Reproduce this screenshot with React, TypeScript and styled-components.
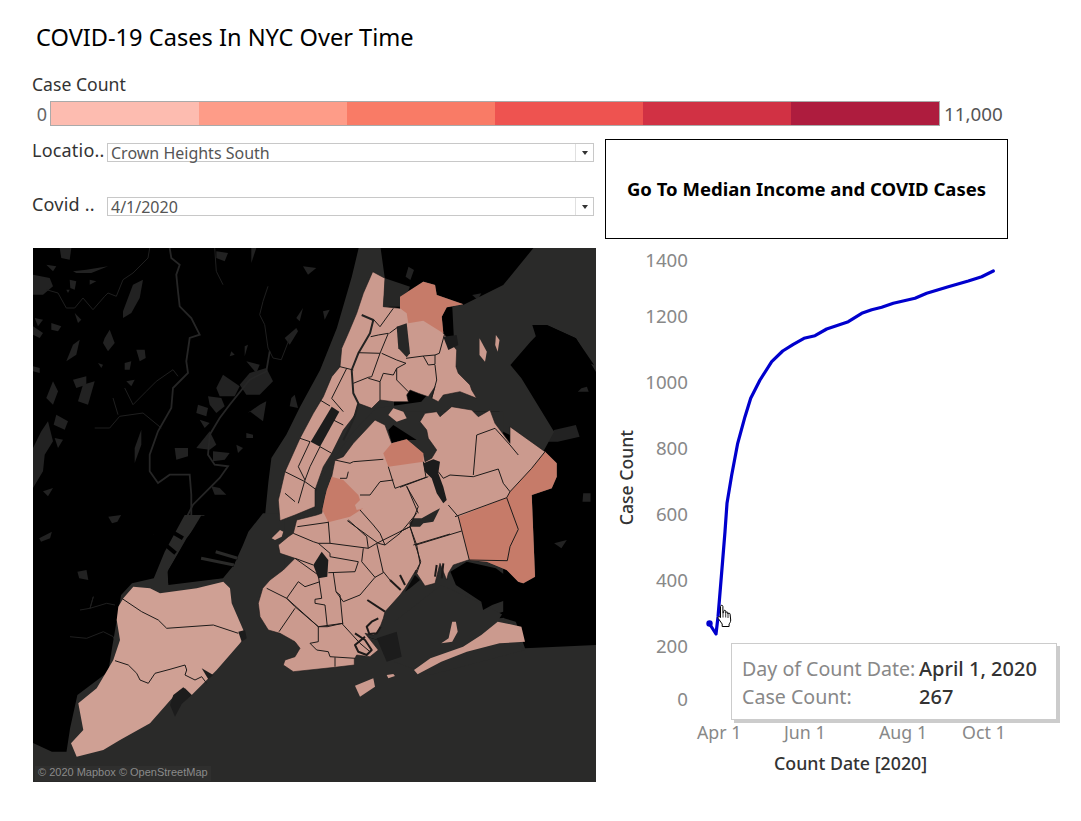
import React from "react";
import styled, { createGlobalStyle } from "styled-components";

const Global = createGlobalStyle`
  html, body { margin: 0; padding: 0; background: #fff; }
  body { font-family: "Noto Sans", "Open Sans", sans-serif; }
`;

const Page = styled.div`
  width: 1081px;
  height: 821px;
  box-sizing: border-box;
  padding: 22px 0 0 32px;
  overflow: hidden;
  position: relative;
`;
const Title = styled.h1`
  margin: 0 0 0 4px;
  font-size: 23.6px;
  line-height: 30px;
  font-weight: 400;
  color: #000;
`;
const LegendLabel = styled.div`
  margin-top: 22px;
  font-size: 17.6px;
  line-height: 21px;
  color: #333;
`;
const LegendRow = styled.div`
  margin-top: 6px;
  display: flex;
  align-items: center;
  height: 25px;
`;
const LegendMin = styled.span`
  width: 15px;
  margin-right: 3px;
  text-align: right;
  font-size: 18px;
  color: #666;
`;
const LegendBar = styled.div`
  width: 890px;
  height: 25px;
  box-sizing: border-box;
  border: 1px solid #aaa;
  display: flex;
`;
const Swatch = styled.div<{ $c: string }>`
  flex: 1;
  background: ${(p) => p.$c};
`;
const LegendMax = styled.span`
  margin-left: 4px;
  font-size: 18.8px;
  color: #555;
`;
const Controls = styled.div`
  margin-top: 13px;
  display: grid;
  grid-template-columns: 562px 403px;
  column-gap: 11px;
  height: 100px;
`;
const Filters = styled.div`
  padding-top: 4px;
  display: flex;
  flex-direction: column;
  gap: 35px;
`;
const FilterRow = styled.div`
  display: flex;
  align-items: flex-start;
`;
const FilterLabel = styled.span`
  width: 75px;
  flex: none;
  font-size: 18px;
  letter-spacing: 0.2px;
  line-height: 14px;
  color: #333;
  white-space: nowrap;
`;
const Select = styled.div`
  flex: 1;
  height: 19px;
  box-sizing: border-box;
  border: 1px solid #c8c8c8;
  display: flex;
  align-items: center;
  position: relative;
  padding-left: 3px;
  font-size: 16px;
  line-height: 17px;
  color: #555;
`;
const SelectValue = styled.span`
  flex: 1;
  position: relative;
  top: 1px;
`;
const Caret = styled.span`
  width: 17px;
  height: 17px;
  border-left: 1px solid #e0e0e0;
  display: flex;
  align-items: center;
  justify-content: center;
  &::after {
    content: "";
    border-left: 3.5px solid transparent;
    border-right: 3.5px solid transparent;
    border-top: 4px solid #333;
  }
`;
const GoButton = styled.div`
  border: 1px solid #000;
  box-sizing: border-box;
  display: flex;
  align-items: center;
  justify-content: center;
  padding-bottom: 1px;
  font-size: 18.5px;
  font-weight: 700;
  color: #000;
`;
const MainRow = styled.div`
  margin-top: 9px;
  display: flex;
`;
const MapWrap = styled.div`
  width: 563px;
  height: 534px;
  flex: none;
  position: relative;
  overflow: hidden;
  background: #000;
  margin-left: 1px;
  margin-right: 1px;
`;
const MapSvg = styled.svg`
  display: block;
  width: 100%;
  height: 100%;
`;
const Attribution = styled.span`
  position: absolute;
  left: 5px;
  bottom: 3px;
  font-family: "Liberation Sans", Arial, sans-serif;
  font-size: 11px;
  line-height: 13px;
  color: #8a8a8a;
`;
const ChartPanel = styled.div`
  position: relative;
  flex: 1;
  display: flex;
  height: 534px;
`;
const AxisTitleCol = styled.div`
  width: 44px;
  flex: none;
  height: 460px;
  display: flex;
  justify-content: flex-end;
  align-items: center;
`;
const AxisTitleY = styled.span`
  writing-mode: vertical-rl;
  transform: rotate(180deg);
  font-size: 17.6px;
  line-height: 20px;
  font-weight: 500;
  color: #333;
  margin-right: 5px;
`;
const YAxis = styled.div`
  width: 47px;
  flex: none;
  display: flex;
  flex-direction: column;
  align-items: flex-end;
`;
const YTick = styled.span<{ $gap: number }>`
  margin-top: ${(p) => p.$gap}px;
  height: 20px;
  font-size: 18.7px;
  line-height: 20px;
  color: #888;
`;
const PlotCol = styled.div`
  display: flex;
  flex-direction: column;
  margin-left: 3px;
`;
const PlotSvg = styled.svg`
  display: block;
  width: 310px;
  height: 472px;
`;
const XAxis = styled.div`
  display: flex;
  height: 24px;
  margin-left: 6px;
`;
const XTick = styled.span<{ $w: number }>`
  width: ${(p) => p.$w}px;
  font-size: 17.8px;
  line-height: 24px;
  color: #888;
  white-space: nowrap;
`;
const AxisTitleX = styled.div`
  margin: 8px 0 0 83px;
  font-size: 17.8px;
  line-height: 22px;
  font-weight: 500;
  color: #333;
  white-space: nowrap;
`;
const Tooltip = styled.div`
  position: absolute;
  left: 134px;
  top: 395px;
  width: 326px;
  height: 77px;
  box-sizing: border-box;
  background: #fff;
  border: 1px solid #ccc;
  box-shadow: 3px 3px 0 #ccc;
  padding: 11px 10px;
  display: grid;
  grid-template-columns: 177px 1fr;
  grid-auto-rows: 28px;
  line-height: 28px;
  white-space: nowrap;
`;
const TipKey = styled.span`
  font-size: 19.6px;
  color: #888;
`;
const TipValue = styled.span`
  font-size: 20px;
  color: #333;
  font-weight: 500;
`;
const Cursor = styled.svg`
  position: absolute;
  left: 120px;
  top: 356px;
  width: 17px;
  height: 24px;
`;

const legend = ["#fdbcb0", "#fe9c88", "#f97b66", "#ee5350", "#d13144", "#ae1c3e"];

const LIGHT = "#cb9a8e";
const MID = "#c67b69";
const PARK = "#1c1c1c";
const WATER = "#2a2a29";
const GREY = "#272726";
const SI = "#cfa094";
const FAINT = "#222222";

/* Map drawing data: points are written in the pixel grid of a 3x crop and mapped back here */
const crop = (ox: number, oy: number, s: string) =>
  s.trim().split(/\s+/).map((p) => {
    const [x, y] = p.split(",").map(Number);
    return `${(ox + x / 3).toFixed(1)},${(oy + y / 3).toFixed(1)}`;
  }).join(" ");
const z = (s: string) =>
  s.trim().split(/\s+/).map((p) => {
    const [x, y] = p.split(",").map(Number);
    return `${(33 + (x - 8) / 2.748).toFixed(1)},${(248 + (y - 9) / 3).toFixed(1)}`;
  }).join(" ");
const A = (s: string) => crop(300, 270, s);
const B = (s: string) => crop(260, 400, s);
const C = (s: string) => crop(400, 400, s);
const D = (s: string) => crop(250, 520, s);
const E = (s: string) => crop(70, 580, s);
const F = (s: string) => crop(33, 248, s);

const waters = [
  z("905,0 962,0 1000,300 1000,900 700,900 645,819 655,710 663,639 704,569 742,485 797,375 843,249 884,95"),
  z("640,805 720,805 730,900 700,1100 1000,1200 1150,1030 1240,1100 1555,1200 1555,1620 0,1620 0,1490 60,1520 100,1520 110,1450 130,1350 215,1280 225,1210 250,1050 280,1015 340,1000 370,920 425,810 480,810 430,880 378,980 380,1020 530,1000 560,960 585,900 600,860"),
  z("1160,180 1190,180 1300,120 1390,0 1560,0 1560,390 1500,280 1420,240 1375,290 1320,360 1350,400 1440,560 1410,620 1300,560 1290,500 1140,500 1000,540 1000,800 700,900 800,700 880,570 950,490 1075,470 1115,420 1170,400"),
  z("1000,500 1300,500 1300,1100 1000,1200 700,1100 700,800"),
  z("1000,1130 1130,1020 1250,1080 1300,1110 1320,1180 1360,1215 1100,1290 1000,1250"),
];

const blacks = [
  z("1155,980 1200,950 1280,970 1340,1020 1345,1050 1270,1080 1245,1095 1240,1070 1170,1020"),
  z("1350,1020 1560,1050 1560,1200 1360,1210 1330,1115 1290,1120"),
  B("385,90 400,75 470,120 430,120 395,130"),
  z("470,812 590,812 590,850 560,960 520,1000 380,1015 380,975"),
  z("1380,240 1420,240 1500,280 1550,360 1480,330 1400,310"),
];

const parks = [
  "0,80 50,90 60,115 30,140 0,140", "120,70 160,65 225,55 175,75 130,75", "300,110 330,95 320,150 295,195 270,210 270,190",
  "110,95 130,100 125,125 112,120", "55,225 85,235 75,250 55,245", "0,235 30,255 20,270 0,260", "120,290 140,275 130,320 100,340",
  "215,270 230,245 245,285 225,310 210,285", "310,305 335,305 338,330 320,340", "275,345 295,340 290,365 275,365",
  "120,395 160,385 160,410 130,420", "150,410 185,400 165,470 135,460", "60,400 75,430 60,470 40,450", "0,355 20,360 20,375 0,370",
  "280,400 305,395 295,415", "70,500 105,520 95,545 62,530", "0,600 25,550 45,520 60,580 35,620 30,670 0,720", "65,570 90,575 75,600",
  "305,600 325,545 325,590 305,645", "425,600 465,600 465,625 430,635", "490,600 530,550 550,590 530,605",
  "550,420 570,380 620,415 605,445 560,445", "525,445 565,450 575,475 550,495 530,470", "495,470 525,480 520,505 490,495",
  "500,515 530,525 515,540", "620,410 650,375 700,360 720,400 680,440 640,440", "645,495 680,470 700,460 690,520 650,490",
  "775,450 785,440 795,480 770,475", "755,270 790,240 795,250 770,290", "790,210 810,180 800,220", "810,55 850,60 825,80",
  "550,10 585,15 575,40 550,30", "655,0 670,0 655,45", "635,295 645,290 635,325", "640,555 660,560 660,570 640,570",
  "610,590 630,600 615,615", "540,610 590,615 575,635 540,640", "535,715 560,720 580,740 545,740", "870,190 890,185 875,215",
  "30,730 60,720 45,745", "80,0 115,0 110,35 85,30", "195,345 210,350 205,360", "40,50 70,55 60,70", "170,95 190,100 170,110",
  "595,310 605,320 590,325", "640,340 680,350 670,375", "125,195 145,215 135,225", "5,210 30,215 15,235", "100,125 110,125 105,135",
].map(F);
const nearParks = [
  z("1440,555 1500,540 1510,575 1450,590 1420,590"), z("1515,430 1530,425 1535,440 1505,440"), z("1330,425 1345,430 1350,445 1325,445"),
  z("1520,745 1540,745 1540,770 1518,770"), z("25,880 60,860 55,880 30,890"), z("215,815 250,810 240,830 225,835"),
  z("130,980 155,975 160,1005 135,1000"), z("1440,895 1475,885 1460,910"), z("1135,1050 1160,1060 1150,1120 1128,1120"),
  z("1410,1100 1450,1090 1430,1130 1400,1150"), z("1470,1080 1530,1060 1520,1110 1490,1110"),
  z("1040,65 1055,75 1045,105 1032,95"), z("1215,150 1240,145 1230,165"), z("1480,310 1520,295 1510,330"), z("1440,280 1480,290 1450,320"),
];

const riversF = [
  "40,125 75,135 100,180 125,180 150,150 180,185 215,145 225,135 250,145 270,95 300,75 345,30 350,0",
  "705,115 690,160 680,200 695,230 705,300 720,330 745,335 770,270",
  "185,540 230,540 260,505 330,495 385,540", "240,450 255,500", "275,420 300,470 340,430 370,400 420,365 435,385",
  "545,0 550,70 570,110",
].map(F);
const riversWide = [
  "410,0 415,30 440,50 430,80 435,130 440,175 475,210 500,260 470,270 460,340 465,375 420,420 415,480 375,550 350,620 350,670 375,705 410,680 470,680 475,740 475,810",
  "710,310 700,370 650,395 590,470 560,510 530,560 525,620 545,650 585,655 560,690 520,730 480,770 460,810",
].map(F);
const thinExtra = [
  E("0,170 50,175 100,155 130,170 140,195"), E("30,90 60,85 70,50 60,85 110,70 135,75"), z("340,870 385,910"), z("1420,1130 1480,1090 1555,1130"), z("1400,1180 1470,1150 1540,1160"),
];
const piers = [z("340,870 400,925"), z("470,940 560,960"), z("510,920 570,940"), z("358,840 420,880")];

const westLand =
  A("218,5 255,25 250,110 300,115 300,80 370,35 405,45 410,75 490,103 440,112 425,140 430,190 470,240 468,290 475,310 510,345 515,360 530,385 480,365 430,375 415,395 395,385 405,350 385,380 355,370 330,360 320,375 325,395 280,395 240,390 215,415 175,400 165,435") +
  " " + B("285,45 250,90 215,160 190,200 165,270 165,320 105,345 60,362 55,300 60,280 75,215 120,115") +
  " " + A("40,430 70,380 95,320 120,290 125,235 145,190 170,130 190,70");

const eastLand =
  B("225,180 250,170 280,130 345,60 375,75 395,130 440,118 490,160") +
  " " + C("75,185 95,175 110,150 85,115 80,90 60,65 75,40 110,35 120,50 155,20 215,30 235,50 270,30 285,70 330,130 330,80 435,155 470,190 470,230 455,265 395,285 405,530 370,550 355,545 320,510 260,485 205,480 160,495 145,520 140,540 120,490 105,550 75,558 50,520") +
  " " + D("498,150 465,205 450,225 405,275 400,295 385,335 370,345 345,340 385,390 360,410 320,405 313,418 313,435 255,442 130,455 100,435 105,420 135,410 150,385 135,365 90,340 55,330 30,290 25,250 38,205 60,180 100,150 135,115 90,100 85,75 115,50 130,40 140,0") +
  " " + B("170,345 185,340 195,290 215,230");

const fills: [string, string][] = [
  [A("255,25 330,50 305,110 250,110"), GREY],
  [A("300,115 300,80 370,35 405,45 410,75 490,103 440,112 425,140 430,190 370,152 325,160 320,130"), MID],
  [A("290,170 320,160 330,250 320,262 295,235"), GREY],
  [A("430,200 470,195 475,225 445,240"), PARK],
  [B("215,20 238,35 180,140 152,125"), PARK],
  [B("215,230 250,240 270,260 295,285 300,300 285,315 290,330 310,325 270,350 205,367 187,330 200,270"), MID],
  [B("370,160 395,130 440,118 490,160 490,185 385,200"), MID],
  [C("175,350 320,293 355,388 330,440 322,482 208,480"), MID],
  [C("320,293 330,275 395,205 435,155 470,190 470,230 455,265 395,285 405,530 370,550 355,545 320,510 260,485 205,480 322,482 330,440 355,388"), MID],
  [C("70,190 100,178 120,185 115,220 130,260 140,300 130,310 110,280 95,235 75,215"), PARK],
  [C("28,370 40,355 65,355 100,335 120,325 100,365 70,370 60,380 30,380"), GREY],
  [D("190,135 215,95 235,120 232,170 205,175"), PARK],
  [D("465,215 495,165 510,180 480,205"), "#0a0a0a"],
  [D("380,355 440,335 455,410 410,425 395,390"), PARK],
  [B("385,45 400,25 430,35 440,55 410,65"), LIGHT],
  [D("315,497 370,475 375,500 330,530"), LIGHT],
  [D("410,465 430,462 435,468 415,475"), LIGHT],
  [D("65,55 90,30 100,35 95,50 75,60"), LIGHT],
  [z("1055,1275 1100,1240 1190,1205 1240,1170 1285,1130 1350,1145 1360,1190 1290,1195 1200,1220 1130,1250 1065,1288"), LIGHT],
  [z("1160,1130 1170,1130 1175,1160 1160,1190 1130,1195 1150,1180"), LIGHT],
  [z("1235,280 1255,320 1250,350 1235,330"), LIGHT],
  [z("1280,270 1290,285 1285,320 1278,300"), LIGHT],
  [E("160,55 190,20 240,25 270,40 380,25 460,5 480,25 485,70 520,150 525,170 510,190 440,270 365,345 345,325 310,350 240,430 150,480 100,510 20,530 3,490 40,450 25,370 80,325 130,240 150,180 140,120 145,80"), SI],
  [E("395,265 430,285 415,298"), PARK],
  [E("310,345 340,322 365,345 335,372 315,410 300,375"), PARK],
  [E("505,155 525,150 530,175 515,185"), PARK],
];

const lines = [
  A("280,115 240,170 222,150"), A("212,200 235,195 265,190 240,250 175,248"), A("240,250 215,320 205,322 160,340"),
  A("245,250 290,270 318,280 290,295 280,315 250,310 240,335 240,390"), A("205,325 240,335"), A("290,295 290,330 325,365"),
  A("318,265 370,258 385,285 405,283 405,255 370,258"), A("405,285 410,330 395,385"), A("433,195 418,250 405,255"),
  A("120,290 160,300"), A("140,295 95,385 130,425"), A("60,390 90,408"), A("100,450 130,465"), A("268,190 295,170"),
  B("120,115 150,125"), B("180,140 215,160"), B("150,125 115,200 135,240"), B("180,140 150,200 135,240 115,310"),
  B("75,215 135,245 170,270"), B("75,280 105,305"), B("225,180 270,190 280,185 370,178"), B("385,200 405,265 498,232 490,185"),
  B("400,240 360,245 330,285 300,285"), B("265,215 260,235 240,235"), B("440,258 475,340"), B("300,330 340,375 360,400 375,435 420,400 470,340"),
  B("262,362 355,430 375,435"), B("112,380 205,367"),
  D("235,5 240,70 355,85 350,50 295,0"), D("130,40 190,65 205,70 240,70"), D("135,115 190,135"),
  D("135,115 205,165 215,235 195,238 195,250 225,255 232,320 205,320 110,235 145,185 165,200 210,185"),
  D("50,205 110,235 135,260 205,320 205,365 180,370"), D("135,265 87,335"), D("205,70 240,100 240,110 325,125 315,155 235,158"),
  D("340,85 335,125 375,172 400,158 380,70 355,85"), D("400,155 420,180 450,210"), D("250,158 258,215 280,245 330,225 375,172"),
  D("258,215 270,225 278,310 232,320"), D("275,310 330,370 360,395"), D("205,320 280,310"), D("180,370 200,390 235,395 240,410 315,415"),
  D("255,412 255,440"), D("380,70 480,20"), D("480,20 500,75 510,130 495,160"), D("490,75 600,42"),
  C("230,105 285,85"), C("230,105 220,225"), C("115,215 130,235 150,225 220,230 295,207 310,250 330,275 395,205 435,155"),
  C("285,85 330,135 355,165"), C("145,315 175,350 208,480"), C("165,350 320,293 330,275"), C("320,293 355,388 330,440 322,482 208,480"),
  C("0,262 85,230"), C("20,260 55,320 30,380 48,440 62,485 50,520"), C("48,435 185,393"), C("0,395 30,380"),
  E("155,55 215,95 265,120 290,145 430,135 505,160"),
  E("135,242 175,255 200,280 210,300 235,310 255,280 300,268 345,255 350,270 345,285 375,300 395,290 410,310"),
];
const heavyLines = [
  D("352,240 405,275"), D("450,165 465,195"), D("420,180 452,210"), D("385,295 365,305 350,320 358,342 380,340 392,320"),
  D("315,340 345,360 365,390 350,405 325,395 315,375 345,350"), D("560,135 555,170"), D("580,130 575,175"),
];
const harlem = [A("185,135 220,150 210,190 175,250 155,300 160,370 175,400 165,435 150,470 130,510")];
const rooseveltGap = [B("270,115 225,175")];

const NycMap: React.FC = () => (
  <MapSvg viewBox="33 248 563 534">
    <rect x="33" y="248" width="563" height="534" fill="#000" />
    {parks.map((d, i) => <polygon key={i} points={d} fill={FAINT} />)}
    {nearParks.map((d, i) => <polygon key={i} points={d} fill={FAINT} />)}
    {riversF.map((d, i) => <polyline key={i} points={d} fill="none" stroke="#1f1f1f" strokeWidth="1" />)}
    {thinExtra.map((d, i) => <polyline key={i} points={d} fill="none" stroke="#1f1f1f" strokeWidth="1" />)}
    {riversWide.map((d, i) => <polyline key={i} points={d} fill="none" stroke="#262626" strokeWidth="1.8" />)}
    {waters.map((d, i) => <polygon key={i} points={d} fill={WATER} />)}
    {piers.map((d, i) => <polyline key={i} points={d} fill="none" stroke="#000" strokeWidth="4" />)}
    {blacks.map((d, i) => <polygon key={i} points={d} fill="#000" />)}
    {piers.slice(1, 3).map((d, i) => <polyline key={i} points={d} fill="none" stroke={WATER} strokeWidth="3" />)}
    <polygon points={westLand} fill={LIGHT} stroke="#1a1a1a" strokeWidth="0.6" />
    <polygon points={eastLand} fill={LIGHT} stroke="#1a1a1a" strokeWidth="0.6" />
    {fills.map(([d, c], i) => <polygon key={i} points={d} fill={c} />)}
    {harlem.map((d, i) => <polyline key={i} points={d} fill="none" stroke="#232322" strokeWidth="2" strokeLinejoin="round" />)}
    {rooseveltGap.map((d, i) => <polyline key={i} points={d} fill="none" stroke={WATER} strokeWidth="1" />)}
    {lines.map((d, i) => <polyline key={i} points={d} fill="none" stroke="#1d1a19" strokeWidth="1" strokeLinejoin="round" />)}
    {heavyLines.map((d, i) => <polyline key={i} points={d} fill="none" stroke="#1d1a19" strokeWidth="2" strokeLinejoin="round" />)}
    <rect x="35" y="766" width="176" height="15" fill="#333" opacity="0.55" />
  </MapSvg>
);

// Line points given in page coordinates
const curve: [number, number][] = [
  [709, 623], [716, 634], [718, 617], [722.7, 560], [725, 531.7], [727, 503.3], [731.7, 475], [737.7, 443.3],
  [745, 416.7], [750.7, 398.3], [760, 380], [771.7, 361.7], [782.7, 351], [793.3, 344.3], [804, 338.3], [815, 335.7],
  [826.7, 329], [848.3, 321.7], [861.7, 313.3], [871.7, 309.7], [881.7, 307.3], [893.3, 303.3], [915, 298.3],
  [926.7, 293.3], [948.3, 286.7], [968.3, 281], [981.7, 276.7], [993.3, 271],
];
const PLOT_X = 691;
const PLOT_Y = 248;
const curvePoints = curve.map(([x, y]) => `${x - PLOT_X},${y - PLOT_Y}`).join(" ");

const yTicks: [string, number][] = [
  ["1400", 2], ["1200", 36], ["1000", 46], ["800", 46], ["600", 46], ["400", 46], ["200", 46], ["0", 33],
];

export default function App() {
  return (
    <Page>
      <Global />
      <Title>COVID-19 Cases In NYC Over Time</Title>
      <LegendLabel>Case Count</LegendLabel>
      <LegendRow>
        <LegendMin>0</LegendMin>
        <LegendBar>{legend.map((c) => <Swatch key={c} $c={c} />)}</LegendBar>
        <LegendMax>11,000</LegendMax>
      </LegendRow>
      <Controls>
        <Filters>
          <FilterRow>
            <FilterLabel>Locatio..</FilterLabel>
            <Select><SelectValue>Crown Heights South</SelectValue><Caret /></Select>
          </FilterRow>
          <FilterRow>
            <FilterLabel>Covid ..</FilterLabel>
            <Select><SelectValue>4/1/2020</SelectValue><Caret /></Select>
          </FilterRow>
        </Filters>
        <GoButton>Go To Median Income and COVID Cases</GoButton>
      </Controls>
      <MainRow>
        <MapWrap>
          <NycMap />
          <Attribution>© 2020 Mapbox © OpenStreetMap</Attribution>
        </MapWrap>
        <ChartPanel>
          <AxisTitleCol><AxisTitleY>Case Count</AxisTitleY></AxisTitleCol>
          <YAxis>
            {yTicks.map(([t, g]) => <YTick key={t} $gap={g}>{t}</YTick>)}
          </YAxis>
          <PlotCol>
            <PlotSvg viewBox="0 0 310 472">
              <polyline points={curvePoints} fill="none" stroke="#0000cd" strokeWidth="3.2" strokeLinejoin="round" strokeLinecap="round" />
              <circle cx="18.5" cy="375.5" r="3.2" fill="#0000cd" />
            </PlotSvg>
            <XAxis>
              <XTick $w={87}>Apr 1</XTick>
              <XTick $w={95}>Jun 1</XTick>
              <XTick $w={83}>Aug 1</XTick>
              <XTick $w={50}>Oct 1</XTick>
            </XAxis>
            <AxisTitleX>Count Date [2020]</AxisTitleX>
          </PlotCol>
          <Cursor viewBox="0 0 17 24">
            <path d="M3.5 2.5c0-1.6 2.4-1.6 2.4 0V9l.8-.5V7.2c0-1.2 2-1.2 2 0v1.6c.2-1.2 2.1-1.2 2.1 0V10c.2-1.1 2.3-1.1 2.3.2l.6 5.8c0 2-.9 3-1.6 4v2.5H5.2V20L1.3 14.5c-.9-1.4.6-2.6 1.7-1.5l.5.6z" fill="#fff" stroke="#000" strokeWidth="1" />
            <path d="M6 9v4.5M8.7 9v4.5M11 10v4" stroke="#000" strokeWidth=".8" fill="none" />
          </Cursor>
          <Tooltip>
            <TipKey>Day of Count Date:</TipKey><TipValue>April 1, 2020</TipValue>
            <TipKey>Case Count:</TipKey><TipValue>267</TipValue>
          </Tooltip>
        </ChartPanel>
      </MainRow>
    </Page>
  );
}
